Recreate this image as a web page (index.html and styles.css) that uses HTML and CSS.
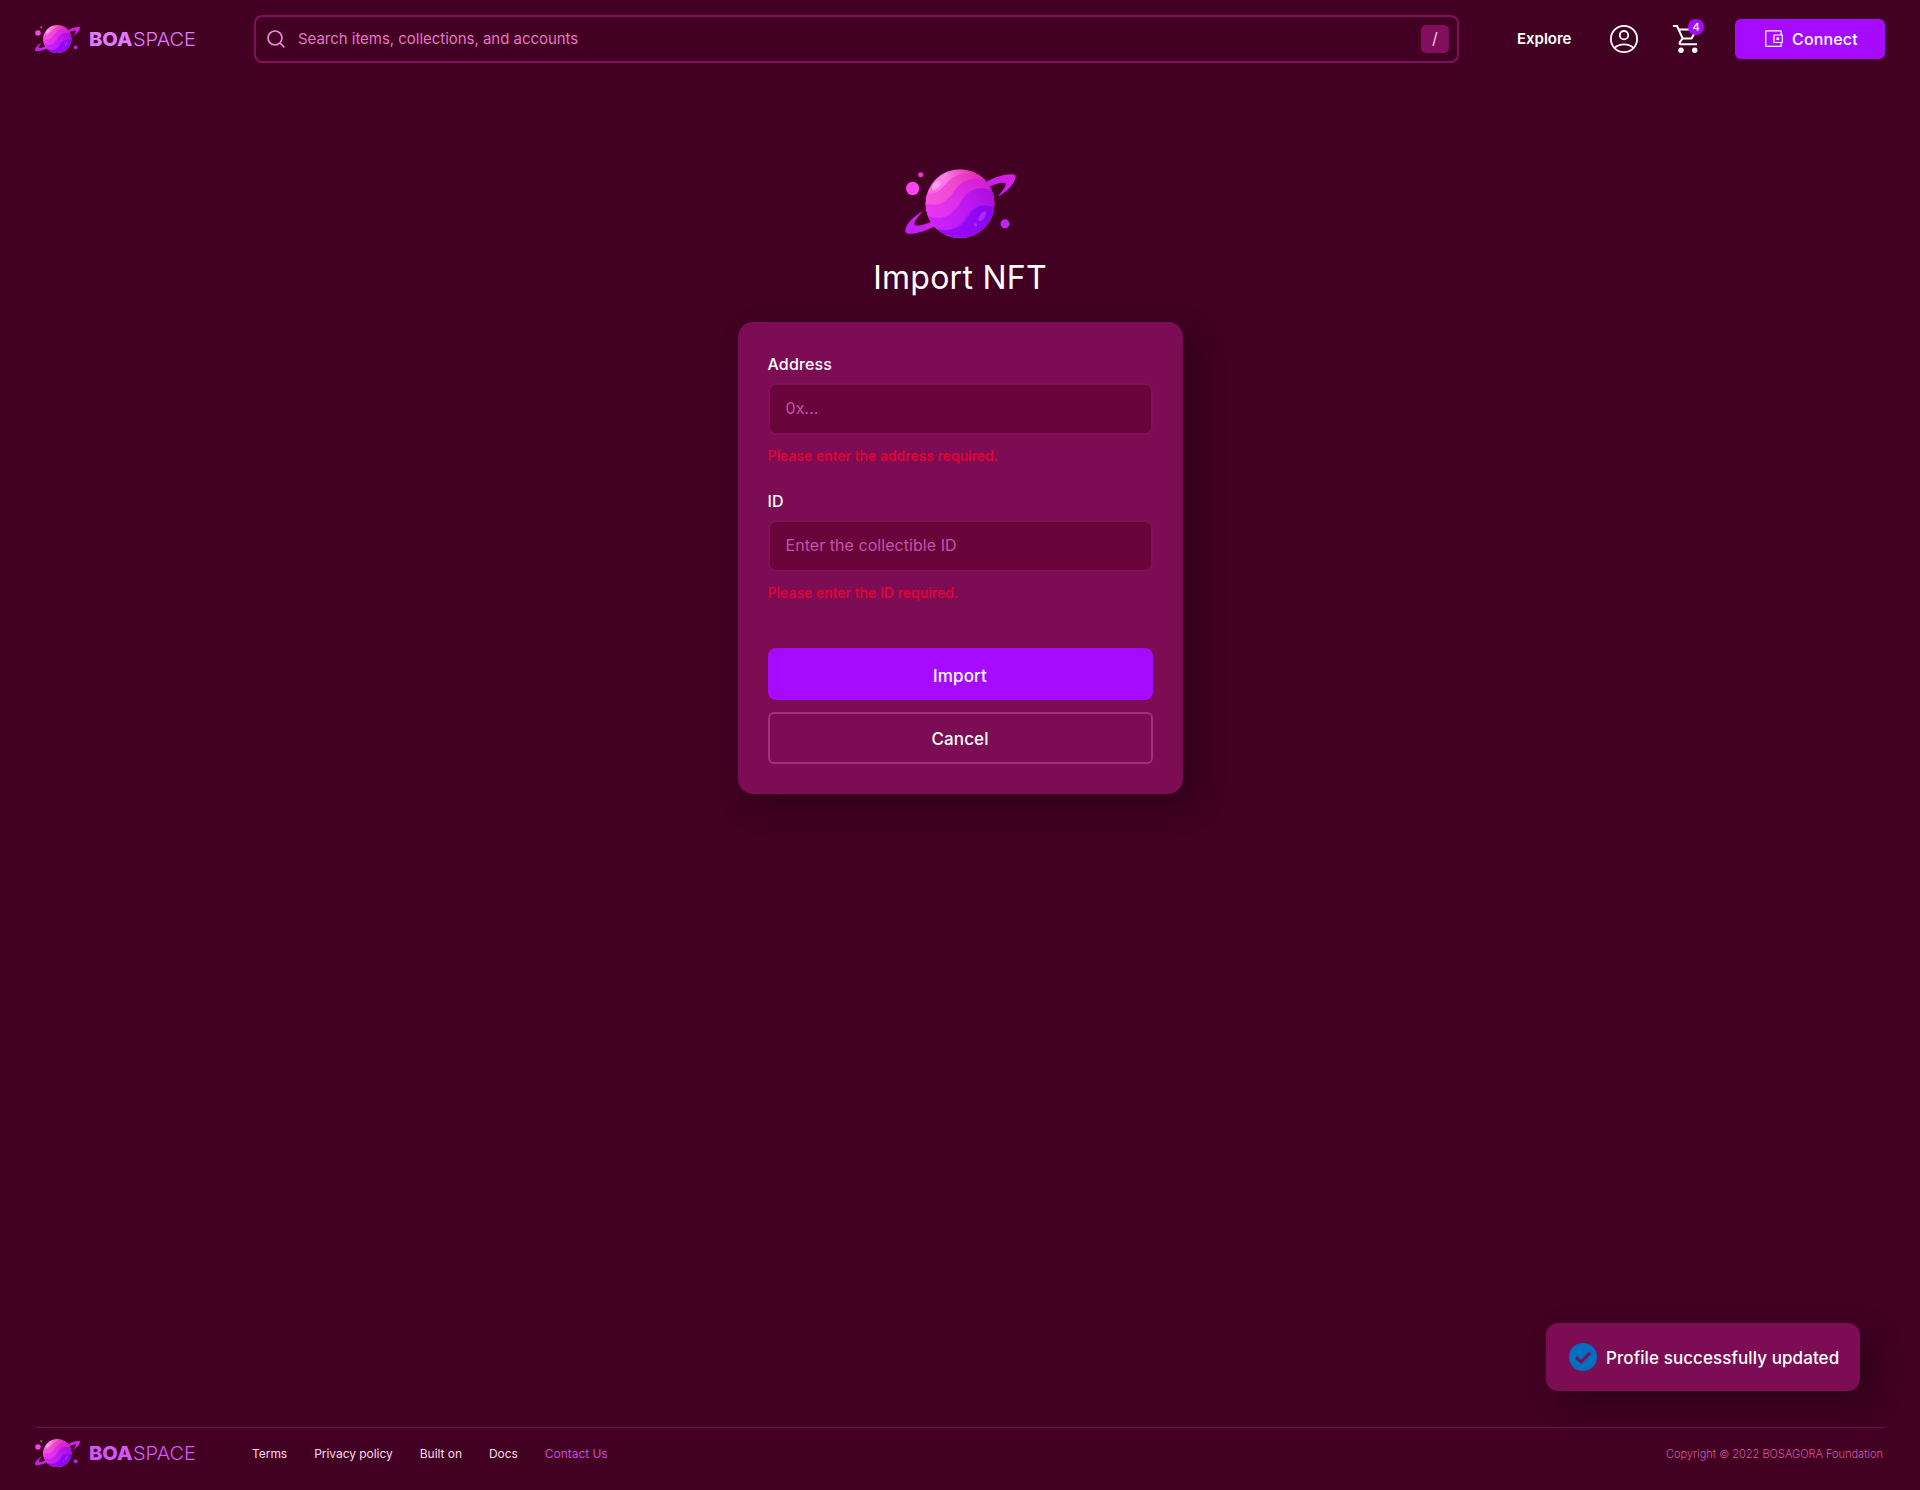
FILE: index.html
```html
<!DOCTYPE html>
<html lang="en">
<head>
<meta charset="utf-8">
<title>BOASPACE - Import NFT</title>
<link rel="stylesheet" href="styles.css">
</head>
<body>
<svg class="defs" width="0" height="0" aria-hidden="true">
  <defs>
    <linearGradient id="g1" gradientUnits="userSpaceOnUse" x1="110" y1="120" x2="290" y2="60"><stop offset="0" stop-color="#f85fdc"/><stop offset=".35" stop-color="#ff7cec"/><stop offset=".7" stop-color="#ee3fbc"/><stop offset="1" stop-color="#e01fa8"/></linearGradient>
    <linearGradient id="g2" gradientUnits="userSpaceOnUse" x1="107" y1="150" x2="300" y2="70"><stop offset="0" stop-color="#f653e4"/><stop offset=".5" stop-color="#ee48cc"/><stop offset="1" stop-color="#e020b0"/></linearGradient>
    <linearGradient id="g3" gradientUnits="userSpaceOnUse" x1="107" y1="180" x2="305" y2="90"><stop offset="0" stop-color="#e838f5"/><stop offset=".5" stop-color="#dc2ce6"/><stop offset="1" stop-color="#d31cd0"/></linearGradient>
    <linearGradient id="g4" gradientUnits="userSpaceOnUse" x1="110" y1="200" x2="312" y2="120"><stop offset="0" stop-color="#cf22fb"/><stop offset=".6" stop-color="#bd18f2"/><stop offset="1" stop-color="#aa0edc"/></linearGradient>
    <linearGradient id="g5" gradientUnits="userSpaceOnUse" x1="150" y1="245" x2="312" y2="160"><stop offset="0" stop-color="#9a0cff"/><stop offset="1" stop-color="#8a06ea"/></linearGradient>
    <linearGradient id="ring" x1="0" y1="1" x2="1" y2="0"><stop offset="0" stop-color="#b620ff"/><stop offset="1" stop-color="#e01ee0"/></linearGradient>
    <clipPath id="ball"><circle cx="209" cy="147" r="103"/></clipPath>
  </defs>
  <symbol id="planet" viewBox="44 44 333 206">
    <path fill="url(#ring)" d="M288 82C325 62 366 54 375 63C381 77 353 112 322 126C337 109 351 91 345 86C337 82 313 89 298 96Z"/>
    <path fill="url(#ring)" d="M98 170C69 184 39 216 46 233C54 244 98 234 134 215L124 202C99 212 76 217 73 209C70 201 84 186 98 170Z"/>
    <g clip-path="url(#ball)">
      <path fill="url(#g1)" d="M100 40H320V260H100Z"/>
      <path fill="url(#g2)" d="M100 119C150 123 156 91 188 69C220 49 260 53 320 84V260H100Z"/>
      <path fill="url(#g3)" d="M100 146C152 161 174 135 193 107C219 70 260 60 320 88V260H100Z"/>
      <path fill="url(#g4)" d="M100 178C154 207 187 181 208 147C235 99 270 91 320 113V260H100Z"/>
      <path fill="#ab12f8" d="M115 214C178 241 206 221 230 183C250 151 280 140 320 160V260H115Z"/>
      <path fill="url(#g5)" d="M140 224C190 236 218 214 235 184C251 154 280 144 320 162V260H140Z"/>
    </g>
    <ellipse cx="138" cy="92" rx="18" ry="9" transform="rotate(-48 138 92)" fill="#ffa0f6"/>
    <path d="M150 71Q162 59 180 54Q171 65 155 74Z" fill="#ff86ee"/>
    <ellipse cx="276" cy="185" rx="17" ry="8" transform="rotate(-57 276 185)" fill="#a62bff"/>
    <circle cx="256" cy="211" r="5" fill="#a62bff"/>
    <circle cx="67" cy="102" r="20" fill="#ff43f3"/>
    <circle cx="91" cy="61" r="7.500" fill="#e935d8"/>
    <circle cx="344" cy="208" r="13.500" fill="#c321f8"/>
  </symbol>
</svg>

<header class="header">
  <a class="logo">
    <svg class="logo-mark"><use href="#planet"/></svg>
    <svg class="logo-text" width="108" height="28"><text class="boa" x="0" y="21" textLength="43.500" lengthAdjust="spacingAndGlyphs">BOA</text><text class="space" x="44" y="21" textLength="63" lengthAdjust="spacingAndGlyphs">SPACE</text></svg>
  </a>
  <div class="search">
    <svg class="search-icon" viewBox="0 0 18 18"><circle cx="8" cy="8" r="7"/><path d="M13 13L17.300 17.300"/></svg>
    <span class="search-text">Search items, collections, and accounts</span>
    <kbd class="key">/</kbd>
  </div>
  <nav class="nav">
    <a class="explore">Explore</a>
    <svg class="account" viewBox="0 0 28 28"><circle cx="14" cy="14" r="13.100"/><circle cx="14" cy="10.200" r="4.200"/><path d="M4.800 22.700C9.500 18.200 18.500 18.200 23.200 22.700"/></svg>
    <div class="cart">
      <svg class="cart-icon" viewBox="0 0 27 28"><path class="line" d="M0 1H4L9.700 13.500H18.500L23 5.500M5.500 4.500H17M9.500 13.500L6.800 17.300Q6 19.300 8 19.300H24"/><circle cx="8" cy="25.200" r="2.700"/><circle cx="21.700" cy="25.200" r="2.700"/></svg>
      <span class="badge">4</span>
    </div>
    <button class="connect">
      <svg class="wallet" viewBox="0 0 18 18"><path d="M16.200 4.800V1.500Q16.200.8 15.500.8H1.500Q.8.800.8 1.500V15.700Q.8 16.400 1.500 16.400H15.500Q16.200 16.400 16.200 15.700V12.600M9 5H17.300V12.500H9Z"/><rect x="11.500" y="7.400" width="2.700" height="2.700"/></svg>
      <span>Connect</span>
    </button>
  </nav>
</header>

<main class="main">
  <svg class="hero"><use href="#planet"/></svg>
  <h1 class="title">Import NFT</h1>
  <form class="card">
    <label class="label">Address</label>
    <div class="input">0x...</div>
    <p class="error">Please enter the address required.</p>
    <label class="label">ID</label>
    <div class="input">Enter the collectible ID</div>
    <p class="error">Please enter the ID required.</p>
    <button type="button" class="btn primary">Import</button>
    <button type="button" class="btn outline">Cancel</button>
  </form>
</main>

<div class="toast">
  <svg class="check" viewBox="0 0 28 28"><circle cx="14" cy="14" r="14"/><path d="M7 14.200L12 19L21.200 9.800"/></svg>
  <span>Profile successfully updated</span>
</div>

<footer class="footer">
  <a class="logo">
    <svg class="logo-mark"><use href="#planet"/></svg>
    <svg class="logo-text" width="108" height="28"><text class="boa" x="0" y="21" textLength="43.500" lengthAdjust="spacingAndGlyphs">BOA</text><text class="space" x="44" y="21" textLength="63" lengthAdjust="spacingAndGlyphs">SPACE</text></svg>
  </a>
  <nav class="links">
    <a>Terms</a><a>Privacy policy</a><a>Built on</a><a>Docs</a><a class="contact">Contact Us</a>
  </nav>
  <span class="copyright">Copyright © 2022 BOSAGORA Foundation</span>
</footer>
</body>
</html>
```
FILE: styles.css
```css
* { box-sizing: border-box; }
body {
  margin: 0;
  height: 1490px;
  display: flex;
  flex-direction: column;
  background: #420023;
  color: #fff;
  font-family: Inter, "Liberation Sans", sans-serif;
}
svg { display: block; flex: none; }
.defs { position: absolute; }
button { font-family: inherit; color: inherit; border: 0; padding: 0; }

.header {
  height: 90px;
  padding: 15px 35px 0 34px;
  display: flex;
  align-items: flex-start;
}
.logo { display: flex; width: 162px; gap: 8px; }
.header .logo { margin-top: 10px; }
.logo-mark { width: 47px; height: 28px; }
.logo-text { fill: #e07aff; font-size: 19px; }
.boa { font-weight: 800; }
.space { font-weight: 300; }
.footer .logo-text { fill: #d457fb; }

.search {
  width: 1205px;
  height: 48px;
  margin-left: 58px;
  border: 2px solid #820f5e;
  border-radius: 8px;
  display: flex;
  align-items: center;
  padding: 0 8px 0 11px;
}
.search-icon { width: 18px; height: 18px; fill: none; stroke: #f087d4; stroke-width: 1.7; }
.search-text { flex: 1; margin: -1px 0 0 13px; font-size: 15px; color: #e675c8; letter-spacing: -0.03px; }
.key {
  width: 28px;
  height: 28px;
  border-radius: 5px;
  background: #820f5e;
  color: #ffc4ee;
  font: 400 16px/26px Inter, sans-serif;
  text-align: center;
}

.nav { display: flex; margin-left: 58px; }
.explore { width: 93px; font-size: 15px; font-weight: 600; line-height: 48px; letter-spacing: -0.02px; }
.account { width: 28px; height: 28px; margin-top: 10px; fill: none; stroke: #fff; stroke-width: 1.8; }
.cart { position: relative; width: 97px; padding: 10px 0 0 35px; }
.cart-icon { width: 27px; height: 28px; fill: #fff; }
.line { fill: none; stroke: #fff; stroke-width: 2; }
.badge {
  position: absolute;
  left: 50px;
  top: 4px;
  width: 16px;
  height: 16px;
  border-radius: 50%;
  background: #a60aff;
  font-size: 11px;
  font-weight: 500;
  line-height: 16px;
  text-align: center;
}
.connect {
  width: 150px;
  height: 40px;
  margin-top: 4px;
  border-radius: 6px;
  background: #a60aff;
  display: flex;
  align-items: center;
  padding-left: 30px;
  gap: 9px;
  font-size: 16px;
  font-weight: 500;
  letter-spacing: 0.15px;
}
.wallet { width: 18px; height: 18px; fill: none; stroke: #fff; stroke-width: 1.2; }
.wallet rect { fill: #fff; stroke: none; }

.main { display: flex; flex-direction: column; align-items: center; padding-top: 79px; }
.hero { width: 111px; height: 69px; }
.title { margin: 20px 0 0; font-size: 32px; font-weight: 400; line-height: 40px; letter-spacing: 0.25px; }
.card {
  width: 445px;
  height: 472px;
  margin-top: 24px;
  padding: 30px;
  border-radius: 15px;
  background: #7c0c53;
  box-shadow: 12px 12px 30px rgba(0, 0, 0, 0.3);
  display: flex;
  flex-direction: column;
}
.label { font-size: 16px; font-weight: 500; line-height: 24px; margin-bottom: 7px; letter-spacing: 0.15px; }
.input {
  height: 52px;
  border: 2px solid #820f58;
  border-radius: 8px;
  background: #69053a;
  padding-left: 16px;
  color: #c650ad;
  font-size: 16px;
  letter-spacing: 0.05px;
  line-height: 46px;
}
.error { margin: 11px 0 23px; font-size: 14px; font-weight: 500; line-height: 20px; letter-spacing: 0.02px; color: #eb0032; }
.btn { height: 52px; font-size: 17px; font-weight: 500; letter-spacing: 0.1px; }
.primary { margin-top: 22px; padding-top: 3px; border-radius: 8px; background: #a60aff; }
.outline { margin-top: 12px; padding-top: 1px; border: 2px solid #a82c82; border-radius: 6px; background: transparent; }

.toast {
  width: 314px;
  height: 68px;
  margin: auto 60px 36px auto;
  border-radius: 12px;
  background: #7c0c53;
  box-shadow: 12px 12px 30px rgba(0, 0, 0, 0.3);
  display: flex;
  align-items: center;
  padding-left: 23px;
  gap: 9px;
  font-size: 17px;
  font-weight: 500;
  letter-spacing: 0.08px;
  white-space: nowrap;
}
.toast span { padding-top: 1px; }
.check { width: 28px; height: 28px; fill: #006fc0; }
.check path { fill: none; stroke: #7c0c53; stroke-width: 2.8; }

.footer {
  height: 63px;
  margin: 0 35px 0 34px;
  border-top: 1px solid #6e0f48;
  padding-top: 11px;
  display: flex;
  font-size: 12px;
  line-height: 29px;
}
.links { display: flex; gap: 27px; margin-left: 56px; color: #ffd8f2; letter-spacing: -0.04px; }
.contact { color: #d046da; }
.copyright { margin-left: auto; margin-right: 2px; color: #d855ab; font-size: 11px; font-weight: 300; line-height: 30px; }
```
